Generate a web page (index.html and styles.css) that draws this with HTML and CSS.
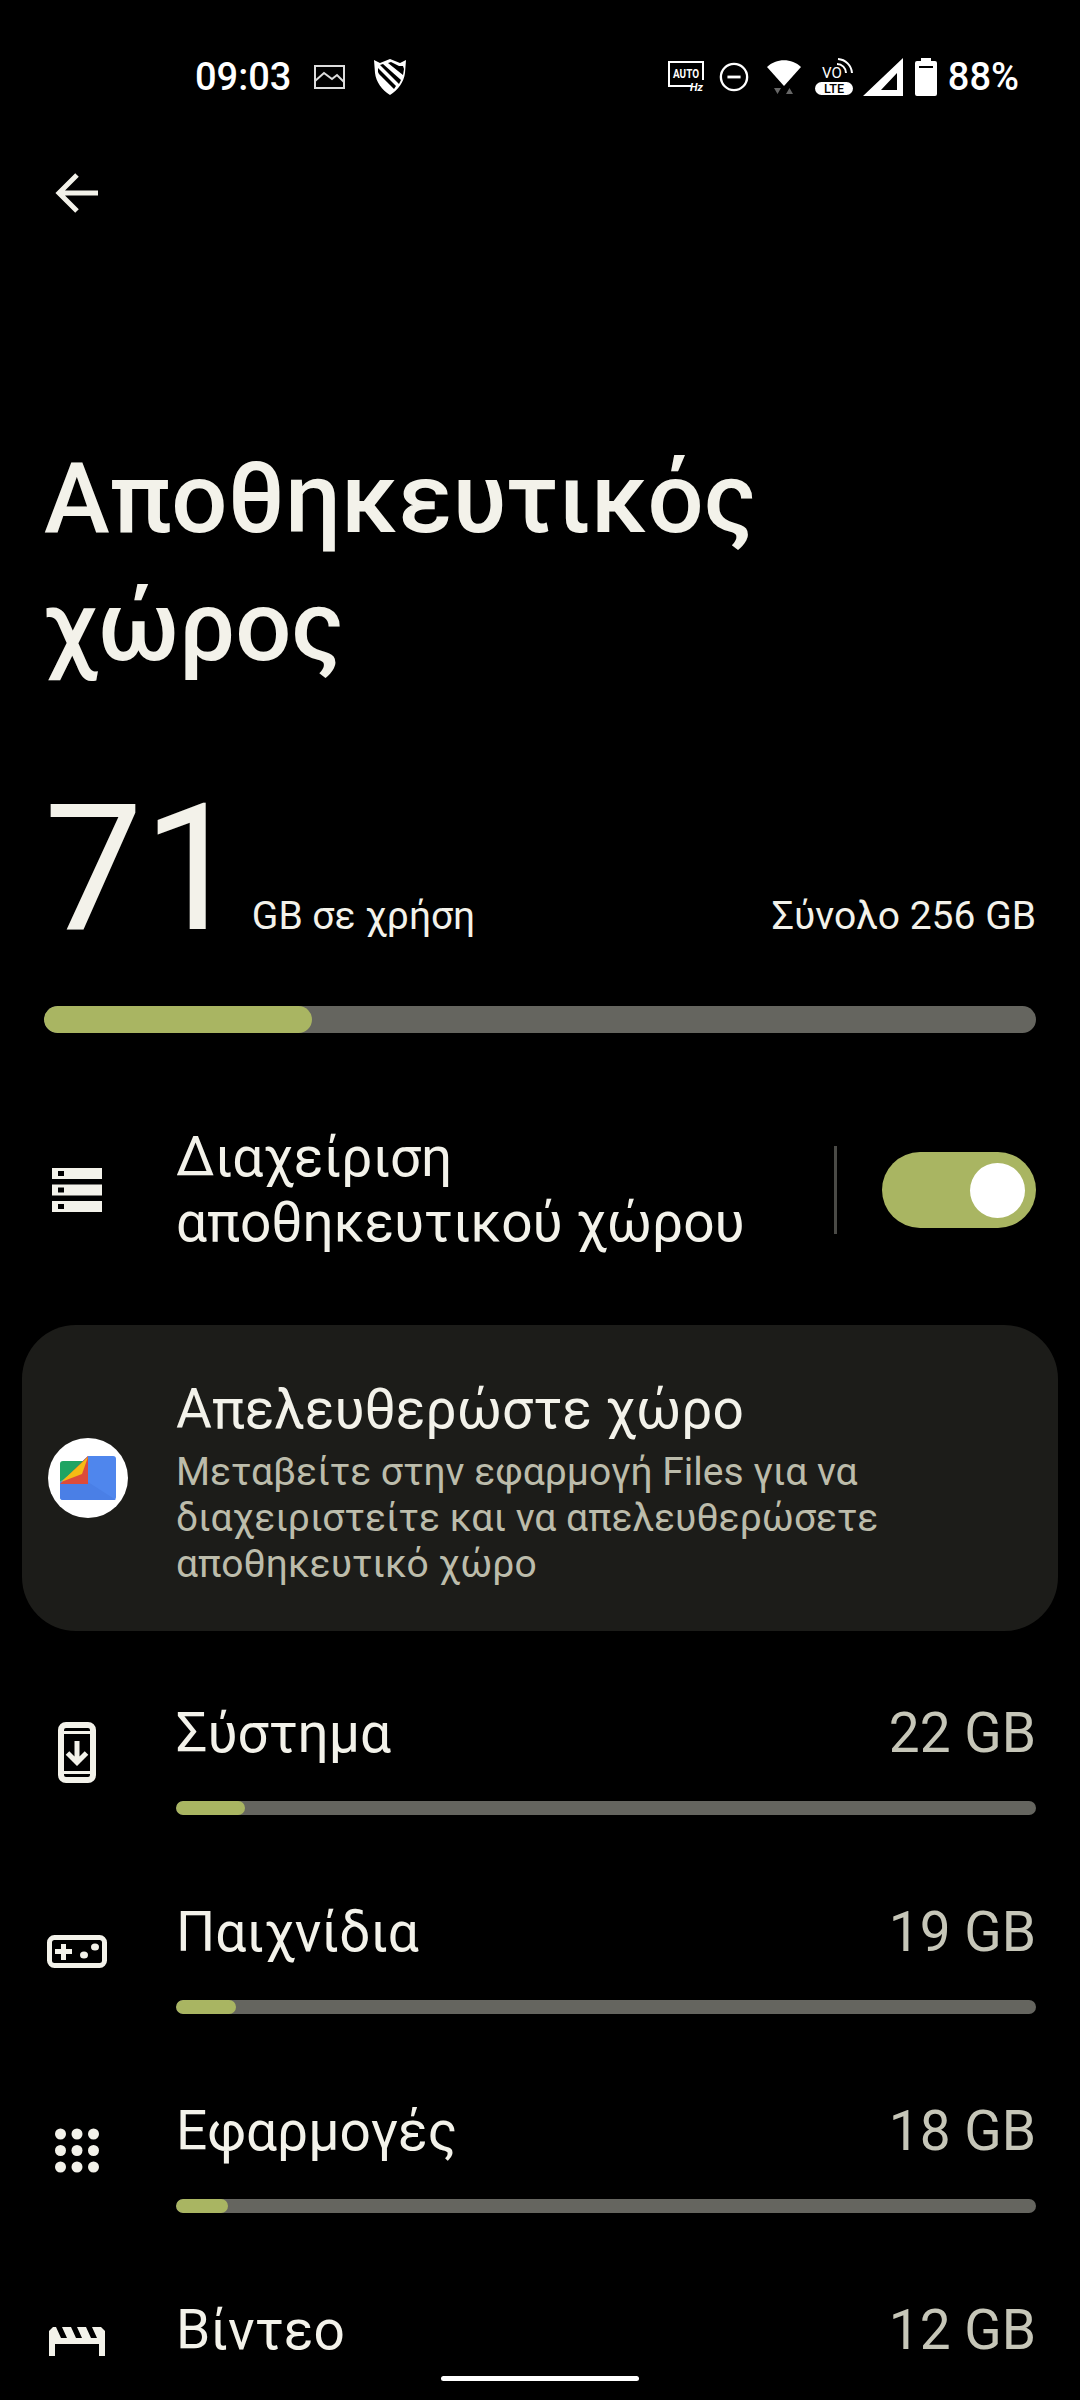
FILE: index.html
```html
<!DOCTYPE html>
<html lang="el">
<head>
  <meta charset="UTF-8" />
  <meta name="viewport" content="width=device-width, initial-scale=1.0"/>
  <title>Αποθηκευτικός χώρος</title>
  <link rel="stylesheet" href="styles.css">
</head>
<body>
  <div class="status-bar">
    <div class="status-left">
      <span class="clock">09:03</span>
      <svg class="ic-photo" viewBox="0 0 31 24"><path d="M1 1h29v22H1zM1 16l9-8 8 6 5-4 7 7" fill="none" stroke="#ddd" stroke-width="2"/></svg>
      <svg class="ic-shield" viewBox="0 0 33 36"><path fill-rule="evenodd" fill="#fff" d="M0 1l6 3 10-4 10 4 6-3-1 13c-1 9-7 17-15 22C8 31 2 23 1 14zM4 9l0 4 1 2 15 15 2-3zM9 5l-3 1L25 25l2-4zM17 3l-3 1 15 12 1-6-1-3-4 0z"/></svg>
    </div>
    <div class="status-right">
      <svg class="ic-auto" viewBox="0 0 36 32"><path d="M23 25H1V1h34v18" fill="none" stroke="#fff" stroke-width="2"/><text x="5" y="17" class="auto-text" textLength="26" lengthAdjust="spacingAndGlyphs">AUTO</text><text x="22" y="30" class="hz-text">Hz</text></svg>
      <svg class="ic-dnd" viewBox="0 0 32 32"><circle cx="16" cy="16" r="14" fill="none" stroke="#fff" stroke-width="2.500"/><rect x="9" y="14.500" width="14" height="3" fill="#fff"/></svg>
      <svg class="ic-wifi" viewBox="0 0 34 36"><path d="M0 8C9-1 25-1 34 8L17 27z" fill="#fff"/><path d="M7 29h7l-3.500 6zM19 35h7l-3.500-6z" fill="#666"/></svg>
      <svg class="ic-volte" viewBox="0 0 38 38"><text x="7" y="20" class="vo-text">VO</text><path d="M22 6a9 9 0 0 1 9 9M23 1a15 15 0 0 1 14 14" fill="none" stroke="#fff" stroke-width="2"/><rect x="0" y="24" width="38" height="13" rx="6.500" fill="#fff"/><text x="9" y="35" class="lte-text" textLength="20" lengthAdjust="spacingAndGlyphs">LTE</text></svg>
      <svg class="ic-signal" viewBox="0 0 40 38"><path fill-rule="evenodd" d="M40 0v38H0zM34 15L18 32h16z" fill="#fff"/></svg>
      <svg class="ic-battery" viewBox="0 0 22 38"><path fill-rule="evenodd" d="M6 0h10v3h4a2 2 0 0 1 2 2v31a2 2 0 0 1-2 2H2a2 2 0 0 1-2-2V5a2 2 0 0 1 2-2h4zM4 8v2h14V8z" fill="#fff"/></svg>
      <span class="battery-pct">88%</span>
    </div>
  </div>

  <div class="toolbar">
    <svg class="back" viewBox="0 0 46 42"><path d="M44 21H5M23 3L5 21l18 18" fill="none" stroke="#f3f2ea" stroke-width="5"/></svg>
  </div>

  <h1>Αποθηκευτικός<br>χώρος</h1>

  <div class="usage">
    <span class="usage-num">71</span>
    <span class="usage-unit">GB σε χρήση</span>
    <span class="usage-total">Σύνολο 256 GB</span>
  </div>
  <div class="bar bar-main"><div class="bar-fill" style="width: 27%"></div></div>

  <div class="manage">
    <div class="icon-col">
      <svg class="ic-storage" viewBox="0 0 50 44"><path fill-rule="evenodd" fill="#f3f2ea" d="M0 0h50v11H0zM6 3v5h6V3zM0 16.500h50v11H0zM6 19.500v5h6v-5zM0 33h50v11H0zM6 36v5h6v-5z"/></svg>
    </div>
    <div class="manage-title">Διαχείριση<br>αποθηκευτικού χώρου</div>
    <div class="divider"></div>
    <div class="toggle"><div class="knob"></div></div>
  </div>

  <div class="card">
    <div class="files-logo">
      <svg viewBox="0 0 56 44" width="56" height="44">
        <path d="M28 0h25a3 3 0 0 1 3 3v38a3 3 0 0 1-3 3H3a3 3 0 0 1-3-3V26z" fill="#4f86ed"/>
        <path d="M3 5h25L0 26V8a3 3 0 0 1 3-3z" fill="#1fa463"/>
        <path d="M28 0v28H0z" fill="#dc4b3a"/>
        <path d="M28 1l-6 17L1 26z" fill="#f5bb14"/>
        <path d="M0 28h28l0-2L56 44H3a3 3 0 0 1-3-3z" fill="#4a7fe6"/>
      </svg>
    </div>
    <div class="card-text">
      <div class="card-title">Απελευθερώστε χώρο</div>
      <div class="card-desc">Μεταβείτε στην εφαρμογή Files για να διαχειριστείτε και να απελευθερώσετε αποθηκευτικό χώρο</div>
    </div>
  </div>

  <div class="list">
    <div class="item">
      <div class="icon-col">
        <svg class="ic-system" viewBox="0 0 38 61"><rect x="3" y="3" width="32" height="55" rx="5" fill="none" stroke="#f3f2ea" stroke-width="6"/><path d="M2 10.500h34M2 50.500h34" stroke="#f3f2ea" stroke-width="3"/><path d="M19 19v21M9.500 31l9.500 9.500 9.500-9.500" fill="none" stroke="#f3f2ea" stroke-width="5"/></svg>
      </div>
      <div class="item-body">
        <div class="item-head"><span class="item-name">Σύστημα</span><span class="item-size">22 GB</span></div>
        <div class="bar bar-item"><div class="bar-fill" style="width: 8%"></div></div>
      </div>
    </div>

    <div class="item">
      <div class="icon-col">
        <svg class="ic-games" viewBox="0 0 60 33"><rect x="2.500" y="2.500" width="55" height="28" rx="5" fill="none" stroke="#f3f2ea" stroke-width="5"/><path d="M8 14h6V9h5v5h6v5h-6v6h-5v-6H8z" fill="#f3f2ea"/><ellipse cx="37" cy="20" rx="4" ry="3.500" fill="#f3f2ea"/><ellipse cx="48" cy="12" rx="4" ry="3.500" fill="#f3f2ea"/></svg>
      </div>
      <div class="item-body">
        <div class="item-head"><span class="item-name">Παιχνίδια</span><span class="item-size">19 GB</span></div>
        <div class="bar bar-item"><div class="bar-fill" style="width: 7%"></div></div>
      </div>
    </div>

    <div class="item">
      <div class="icon-col">
        <svg class="ic-apps" viewBox="0 0 44 45" fill="#f3f2ea"><circle cx="5.500" cy="6" r="5.500"/><circle cx="22" cy="6" r="5.500"/><circle cx="38.500" cy="6" r="5.500"/><circle cx="5.500" cy="22.500" r="5.500"/><circle cx="22" cy="22.500" r="5.500"/><circle cx="38.500" cy="22.500" r="5.500"/><circle cx="5.500" cy="39" r="5.500"/><circle cx="22" cy="39" r="5.500"/><circle cx="38.500" cy="39" r="5.500"/></svg>
      </div>
      <div class="item-body">
        <div class="item-head"><span class="item-name">Εφαρμογές</span><span class="item-size">18 GB</span></div>
        <div class="bar bar-item"><div class="bar-fill" style="width: 6%"></div></div>
      </div>
    </div>

    <div class="item">
      <div class="icon-col">
        <svg class="ic-video" viewBox="0 0 56 46"><path d="M0 46V4l4-4h3l5 11h6L13 0h9l5 11h6L28 0h9l5 11h6L43 0h9l4 4v42h-6V17H6v29z" fill="#f3f2ea"/></svg>
      </div>
      <div class="item-body">
        <div class="item-head"><span class="item-name">Βίντεο</span><span class="item-size">12 GB</span></div>
        <div class="bar bar-item"><div class="bar-fill" style="width: 4%"></div></div>
      </div>
    </div>
  </div>

  <div class="nav-bar"><div class="home-handle"></div></div>
</body>
</html>
```

FILE: styles.css
```css
* {
  box-sizing: border-box;
  font-family: Roboto, 'Noto Sans', sans-serif;
}

html, body {
  height: 2400px;
  overflow: hidden;
}

body {
  background: #000;
  color: #f3f2ea;
  margin: 0;
  position: relative;
}

svg {
  display: block;
}

.status-bar {
  display: flex;
  justify-content: space-between;
  align-items: center;
  height: 154px;
  padding: 0 61px 0 195px;
  color: #fff;
}

.status-left, .status-right {
  display: flex;
  align-items: center;
}

.clock, .battery-pct {
  font-size: 38px;
  font-weight: 500;
}

.ic-photo { width: 31px; height: 24px; margin-left: 23px; }
.ic-shield { width: 33px; height: 36px; margin-left: 29px; }
.ic-auto { width: 36px; height: 32px; }
.ic-dnd { width: 30px; height: 30px; margin-left: 15px; }
.ic-wifi { width: 34px; height: 36px; margin-left: 18px; }
.ic-volte { width: 38px; height: 38px; margin-left: 14px; }
.ic-signal { width: 40px; height: 38px; margin-left: 10px; }
.ic-battery { width: 22px; height: 38px; margin-left: 12px; }
.battery-pct { margin-left: 11px; }

.auto-text { font-size: 12px; font-weight: 700; fill: #fff; }
.hz-text { font-size: 11px; font-weight: 700; font-style: italic; fill: #fff; }
.vo-text { font-size: 15px; fill: #fff; }
.lte-text { font-size: 12px; font-weight: 500; fill: #000; }

.toolbar {
  padding: 18px 0 0 54px;
}

.back {
  width: 46px;
  height: 42px;
}

h1 {
  margin: 0;
  padding: 0 44px;
  margin-top: 220px;
  font-size: 99px;
  line-height: 128px;
  font-weight: 500;
  color: #f3f2ea;
}

.usage {
  display: flex;
  align-items: baseline;
  padding: 0 44px;
  margin-top: 84px;
}

.usage-num {
  font-size: 176px;
  line-height: 190px;
  font-weight: 400;
}

.usage-unit {
  font-size: 39px;
  margin-left: 10px;
}

.usage-total {
  font-size: 39px;
  margin-left: auto;
}

.bar {
  background: #65655f;
  overflow: hidden;
}

.bar-fill {
  height: 100%;
  background: #a9b562;
  border-radius: inherit;
}

.bar-main {
  margin: 42px 44px 0;
  height: 27px;
  border-radius: 14px;
}

.manage {
  display: flex;
  align-items: center;
  margin-top: 78px;
  height: 158px;
  padding-right: 44px;
}

.icon-col {
  width: 176px;
  flex-shrink: 0;
  padding-left: 44px;
}

.ic-storage { width: 50px; height: 44px; margin-left: 8px; }

.manage-title {
  flex: 1;
  font-size: 55px;
  line-height: 65px;
}

.divider {
  width: 3px;
  height: 88px;
  background: #4a4a46;
}

.toggle {
  width: 154px;
  height: 76px;
  border-radius: 38px;
  background: #a9b562;
  margin-left: 45px;
  display: flex;
  justify-content: flex-end;
  align-items: center;
  padding-right: 11px;
}

.knob {
  width: 55px;
  height: 55px;
  border-radius: 50%;
  background: #fff;
}

.card {
  display: flex;
  align-items: center;
  margin: 56px 22px 0;
  height: 306px;
  background: #1c1c19;
  border-radius: 54px;
  padding-left: 26px;
  padding-right: 22px;
}

.files-logo {
  width: 80px;
  height: 80px;
  border-radius: 50%;
  background: #fff;
  display: flex;
  align-items: center;
  justify-content: center;
  flex-shrink: 0;
}

.card-text {
  margin-left: 48px;
  padding-top: 8px;
}

.card-title {
  font-size: 55px;
  line-height: 64px;
  margin-bottom: 8px;
}

.card-desc {
  font-size: 39px;
  line-height: 46px;
  color: #bcbcab;
}

.list {
  margin-top: 27px;
}

.item {
  display: flex;
  align-items: center;
  height: 199px;
  padding-right: 44px;
}

.item .icon-col svg { margin-bottom: 10px; }

.ic-system { width: 38px; height: 61px; margin-left: 14px; }
.ic-games { width: 60px; height: 33px; margin-left: 3px; }
.ic-apps { width: 44px; height: 45px; margin-left: 11px; }
.ic-video { width: 56px; height: 46px; margin-left: 5px; }

.item-body {
  flex: 1;
}

.item-head {
  display: flex;
  justify-content: space-between;
  align-items: baseline;
  line-height: 64px;
}

.item-name {
  font-size: 55px;
}

.item-size {
  font-size: 55px;
  color: #c6c6b8;
}

.bar-item {
  margin-top: 36px;
  height: 14px;
  border-radius: 7px;
}

.nav-bar {
  position: absolute;
  left: 0;
  right: 0;
  top: 2356px;
  height: 44px;
  background: #000;
}

.home-handle {
  width: 198px;
  height: 5px;
  margin: 20px auto 0;
  border-radius: 3px;
  background: #fff;
}
```
